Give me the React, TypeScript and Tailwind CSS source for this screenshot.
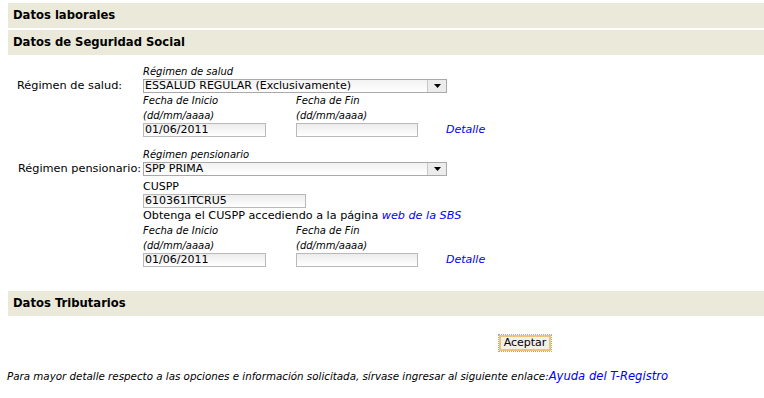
import React from 'react';

const font = { fontFamily: '"DejaVu Sans", Verdana, sans-serif' };

const SectionBar = ({ title }: { title: string }) => (
  <div className="ml-2 h-[25px] bg-[#ebe9da] flex items-center pl-[5px]">
    <span className="text-[11.6px] font-bold text-black">{title}</span>
  </div>
);

const Hint = ({ children }: { children: React.ReactNode }) => (
  <div className="h-[15px] text-[10px] italic leading-[15px] text-black">{children}</div>
);

const TextBox = ({ value = '', width }: { value?: string; width: string }) => (
  <div className={`${width} h-[14px] border border-[#b9b9b9] bg-gradient-to-b from-[#ececec] to-white text-[11px] leading-[12px] pl-[1px] text-black`}>
    {value}
  </div>
);

const Select = ({ value }: { value: string }) => (
  <div className="w-[304px] h-[14px] border border-[#a9a9a9] bg-gradient-to-b from-[#f2f2f2] to-white flex">
    <div className="flex-1 text-[11px] leading-[12px] pl-[1px] text-black whitespace-nowrap">{value}</div>
    <div className="w-[19px] h-full border-l border-[#c8c8c8] bg-[#ececec] flex items-center justify-center">
      <svg width="7" height="4" viewBox="0 0 7 4">
        <path d="M0 0 L7 0 L3.5 4 Z" fill="#000" />
      </svg>
    </div>
  </div>
);

const DateRow = () => (
  <div className="flex">
    <div className="w-[153px]">
      <Hint>Fecha de Inicio</Hint>
      <Hint>(dd/mm/aaaa)</Hint>
      <TextBox value="01/06/2011" width="w-[123px]" />
    </div>
    <div className="w-[150px]">
      <Hint>Fecha de Fin</Hint>
      <Hint>(dd/mm/aaaa)</Hint>
      <TextBox width="w-[122px]" />
    </div>
    <div className="flex items-end">
      <a className="text-[11px] italic text-[#0000ff] leading-[14px]">Detalle</a>
    </div>
  </div>
);

export default function App() {
  return (
    <div className="w-[764px] h-[398px] bg-white overflow-hidden pt-[3px]" style={font}>
      <SectionBar title="Datos laborales" />
      <div className="h-[2px]" />
      <SectionBar title="Datos de Seguridad Social" />

      <div className="mt-[9px] flex">
        <div className="w-[143px] shrink-0 pl-[17px] pt-[15px] text-[11.3px] leading-[14px] text-black whitespace-nowrap">Régimen de salud:</div>
        <div>
          <Hint>Régimen de salud</Hint>
          <Select value="ESSALUD REGULAR (Exclusivamente)" />
          <DateRow />
        </div>
      </div>

      <div className="mt-[10px] flex">
        <div className="w-[143px] shrink-0 pl-[18px] pt-[15px] text-[11.3px] leading-[14px] text-black whitespace-nowrap">Régimen pensionario:</div>
        <div>
          <Hint>Régimen pensionario</Hint>
          <Select value="SPP PRIMA" />
          <div className="h-[18px] pt-[3px] text-[11px] leading-[15px] text-black">CUSPP</div>
          <TextBox value="610361ITCRU5" width="w-[163px]" />
          <div className="h-[15px] text-[11.2px] leading-[15px] text-black whitespace-nowrap">
            Obtenga el CUSPP accediendo a la página <a className="italic text-[#0000ff]">web de la SBS</a>
          </div>
          <DateRow />
        </div>
      </div>

      <div className="mt-[24px]">
        <SectionBar title="Datos Tributarios" />
      </div>

      <div className="mt-[18px] flex pl-[498px]">
        <div className="flex h-[18px] border border-dotted border-[#a8a8a8]">
          <button className="h-[16px] w-[52px] border-2 border-[#efc27a] bg-[#f1f0ea] text-[11px] leading-[12px] text-black">
            Aceptar
          </button>
        </div>
      </div>

      <div className="mt-[17px] pl-[7px] text-[10.3px] leading-[14px] italic text-black whitespace-nowrap">
        Para mayor detalle respecto a las opciones e información solicitada, sírvase ingresar al siguiente enlace:
        <a className="text-[#0000ff] text-[11.6px]">Ayuda del T-Registro</a>
      </div>
    </div>
  );
}
